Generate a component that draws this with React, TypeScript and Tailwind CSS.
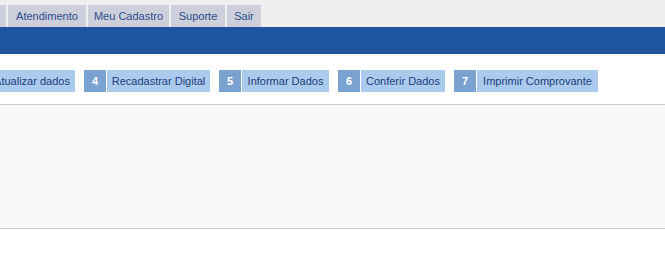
const tabs = [
  { label: "Atendimento", w: "w-[78px]" },
  { label: "Meu Cadastro", w: "w-[81px]" },
  { label: "Suporte", w: "w-[54px]" },
  { label: "Sair", w: "w-[34px]" },
]

const steps = [
  { n: 3, label: "Atualizar dados", w: "w-[86px]" },
  { n: 4, label: "Recadastrar Digital", w: "w-[103px]" },
  { n: 5, label: "Informar Dados", w: "w-[87px]" },
  { n: 6, label: "Conferir Dados", w: "w-[84px]" },
  { n: 7, label: "Imprimir Comprovante", w: "w-[121px]" },
]

export default function App() {
  return (
    <div className="w-[665px] h-[263px] overflow-hidden bg-white font-['Liberation_Sans',Arial,sans-serif]">
      {/* Top menu */}
      <div className="flex items-end gap-[2px] h-[27px] bg-[#efefef]">
        <div className="w-[6px] h-[22px] bg-[#cdd0da]" />
        {tabs.map((t) => (
          <div
            key={t.label}
            className={`${t.w} h-[22px] flex items-center justify-center whitespace-nowrap bg-[#cdd0da] text-[11px] text-[#2c4b8c]`}
          >
            {t.label}
          </div>
        ))}
      </div>

      {/* Blue bar */}
      <div className="h-[27px] bg-[#1e54a0]" />

      {/* Steps */}
      <div className="flex gap-[9px] mt-[16px] ml-[-34px] h-[22px]">
        {steps.map((s) => (
          <div key={s.n} className="flex gap-[1px] shrink-0">
            <div className="w-[22px] h-[22px] flex items-center justify-center bg-[#7aa2d0] text-white text-[11px] font-bold">
              {s.n}
            </div>
            <div
              className={`${s.w} h-[22px] flex items-center justify-center whitespace-nowrap bg-[#aacbee] text-[#1d3d7a] text-[11px]`}
            >
              {s.label}
            </div>
          </div>
        ))}
      </div>

      {/* Content panel */}
      <div className="mt-[12px] h-[125px] border-y border-[#cfcbdb] bg-[#f9f9f9]" />
    </div>
  )
}
